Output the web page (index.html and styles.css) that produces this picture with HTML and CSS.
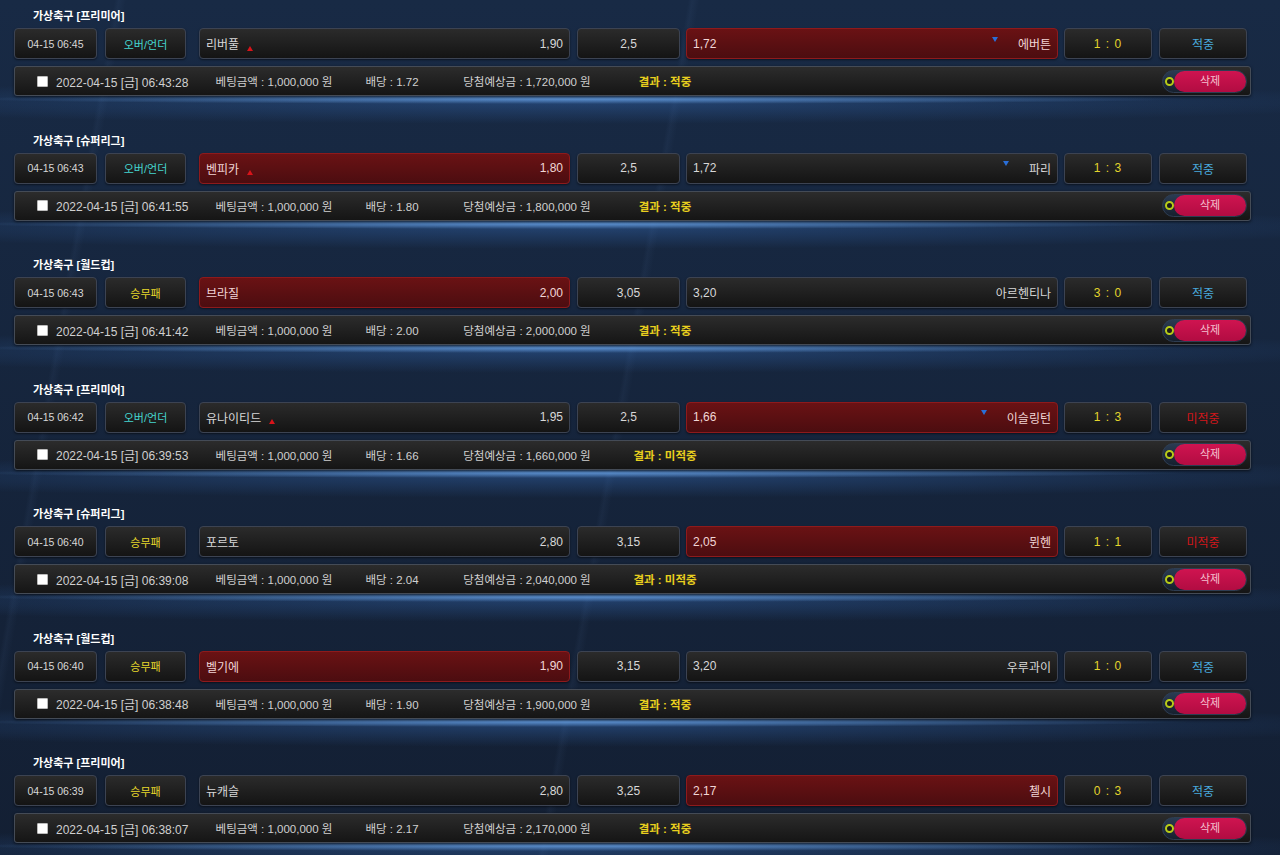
FILE: index.html
```html
<!DOCTYPE html>
<html lang="ko">
<head>
  <meta charset="UTF-8">
  <meta name="viewport" content="width=device-width, initial-scale=1">
  <title>베팅내역</title>
  <link rel="stylesheet" href="styles.css">
</head>
<body>

  <div class="bet-list" id="bet-list"></div>

  <script>
    const bets = [
      { league: '프리미어', time: '04-15 06:45', type: '오버/언더', ou: true, home: '리버풀', homeOdd: '1,90', draw: '2,5', awayOdd: '1,72', away: '에버튼', pick: 'away', score: '1 : 0', hit: true, date: '2022-04-15 [금] 06:43:28', rate: '1.72', win: '1,720,000' },
      { league: '슈퍼리그', time: '04-15 06:43', type: '오버/언더', ou: true, home: '벤피카', homeOdd: '1,80', draw: '2,5', awayOdd: '1,72', away: '파리', pick: 'home', score: '1 : 3', hit: true, date: '2022-04-15 [금] 06:41:55', rate: '1.80', win: '1,800,000' },
      { league: '월드컵', time: '04-15 06:43', type: '승무패', ou: false, home: '브라질', homeOdd: '2,00', draw: '3,05', awayOdd: '3,20', away: '아르헨티나', pick: 'home', score: '3 : 0', hit: true, date: '2022-04-15 [금] 06:41:42', rate: '2.00', win: '2,000,000' },
      { league: '프리미어', time: '04-15 06:42', type: '오버/언더', ou: true, home: '유나이티드', homeOdd: '1,95', draw: '2,5', awayOdd: '1,66', away: '이슬링턴', pick: 'away', score: '1 : 3', hit: false, date: '2022-04-15 [금] 06:39:53', rate: '1.66', win: '1,660,000' },
      { league: '슈퍼리그', time: '04-15 06:40', type: '승무패', ou: false, home: '포르토', homeOdd: '2,80', draw: '3,15', awayOdd: '2,05', away: '뮌헨', pick: 'away', score: '1 : 1', hit: false, date: '2022-04-15 [금] 06:39:08', rate: '2.04', win: '2,040,000' },
      { league: '월드컵', time: '04-15 06:40', type: '승무패', ou: false, home: '벨기에', homeOdd: '1,90', draw: '3,15', awayOdd: '3,20', away: '우루과이', pick: 'home', score: '1 : 0', hit: true, date: '2022-04-15 [금] 06:38:48', rate: '1.90', win: '1,900,000' },
      { league: '프리미어', time: '04-15 06:39', type: '승무패', ou: false, home: '뉴캐슬', homeOdd: '2,80', draw: '3,25', awayOdd: '2,17', away: '첼시', pick: 'away', score: '0 : 3', hit: true, date: '2022-04-15 [금] 06:38:07', rate: '2.17', win: '2,170,000' }
    ];

    const list = document.getElementById('bet-list');

    bets.forEach(b => {
      const block = document.createElement('div');
      block.className = 'block';
      block.innerHTML = `
        <div class="league">가상축구 [${b.league}]</div>
        <div class="game-row">
          <div class="cell time">${b.time}</div>
          <div class="cell type ${b.ou ? 'ou' : 'wdl'}">${b.type}</div>
          <div class="cell team home ${b.pick === 'home' ? 'picked' : ''}">
            <span class="name">${b.home}${b.ou ? '<i class="up"></i>' : ''}</span>
            <span>${b.homeOdd}</span>
          </div>
          <div class="cell draw">${b.draw}</div>
          <div class="cell team away ${b.pick === 'away' ? 'picked' : ''}">
            <span>${b.awayOdd}</span>
            <span class="name">${b.ou ? '<i class="down"></i>' : ''}${b.away}</span>
          </div>
          <div class="cell score">${b.score}</div>
          <div class="cell result ${b.hit ? 'hit' : 'miss'}">${b.hit ? '적중' : '미적중'}</div>
        </div>
        <div class="info-row">
          <span class="check"></span>
          <span class="info date">${b.date}</span>
          <span class="info amount">베팅금액 : 1,000,000 원</span>
          <span class="info rate">배당 : ${b.rate}</span>
          <span class="info win">당첨예상금 : ${b.win} 원</span>
          <span class="info outcome">결과 : ${b.hit ? '적중' : '미적중'}</span>
          <button class="del-btn"><span class="dot"></span><span class="del-label">삭제</span></button>
        </div>
      `;
      list.appendChild(block);
    });
  </script>
</body>
</html>
```

FILE: styles.css
```css
* { box-sizing: border-box; }
body {
  margin: 0;
  font-family: 'Liberation Sans', 'Noto Sans CJK KR', sans-serif;
  background: #15233a;
  color: #ddd;
  min-height: 100vh;
  overflow: hidden;
}

.bet-list {
  background:
    linear-gradient(100deg, transparent 0 8%, rgba(120,160,220,0.05) 8.3%, transparent 8.8%),
    linear-gradient(100deg, transparent 0 48%, rgba(120,160,220,0.05) 48.3%, transparent 48.8%),
    linear-gradient(to bottom, #182a45, #131f33);
}

.block {
  height: 124.5px;
  padding: 9px 0 0 14px;
  background:
    radial-gradient(ellipse 48% 5px at 45% 99px, rgba(110,170,240,0.75), transparent),
    radial-gradient(ellipse 65% 22px at 45% 102px, rgba(50,100,170,0.45), transparent);
}

.league {
  height: 14px;
  line-height: 14px;
  margin: 0 0 5px 19px;
  font-size: 11px;
  font-weight: bold;
  color: #fff;
}

.game-row {
  display: flex;
  height: 31px;
}

.cell {
  height: 31px;
  display: flex;
  align-items: center;
  justify-content: center;
  font-size: 12px;
  color: #d8d8d8;
  background: linear-gradient(to bottom, #2b2b2b, #141414);
  border: 1px solid #3c4352;
  border-radius: 4px;
  box-shadow: 0 1px 2px rgba(0,0,0,0.5);
}

.time { width: 83px; margin-right: 8px; font-size: 10.5px; }
.type { width: 81px; margin-right: 13px; font-size: 11px; }
.type.ou { color: #45d6cf; }
.type.wdl { color: #e7d72a; }

.team {
  justify-content: space-between;
  padding: 0 6px;
}
.home { width: 371px; margin-right: 7px; }
.draw { width: 103px; margin-right: 6px; }
.away { width: 372px; margin-right: 6px; }

.team.picked {
  background: linear-gradient(to bottom, #6a1214, #4c0d10);
  border-color: #8e1a1c;
  color: #f1d6d6;
}

.name { display: flex; align-items: center; }

.up {
  display: inline-block;
  margin: 9px 0 0 8px;
  border-left: 3px solid transparent;
  border-right: 3px solid transparent;
  border-bottom: 5px solid #d8141a;
}

.down {
  display: inline-block;
  margin: -9px 20px 0 0;
  border-left: 3px solid transparent;
  border-right: 3px solid transparent;
  border-top: 5px solid #2a6fd8;
}

.score { width: 88px; margin-right: 7px; color: #e3d52c; font-size: 12px; letter-spacing: 1px; }
.result { width: 88px; }
.result.hit { color: #49a9dc; }
.result.miss { color: #d0161a; }

.info-row {
  display: flex;
  align-items: center;
  width: 1237px;
  height: 30px;
  margin-top: 7px;
  background: linear-gradient(to bottom, #2c2c2c, #151515);
  border: 1px solid #444b56;
  border-radius: 3px;
  box-shadow: 0 1px 3px rgba(0,0,0,0.6);
}

.check {
  width: 11px;
  height: 11px;
  margin-left: 22px;
  background: #fff;
  border: 1px solid #bbb;
  border-radius: 1px;
}

.info {
  font-size: 11.5px;
  color: #d0d0d0;
  text-align: center;
  white-space: nowrap;
}
.date { width: 144px; text-align: left; padding-left: 8px; font-size: 12px; }
.amount { width: 164px; }
.rate { width: 72px; }
.win { width: 198px; }
.outcome { width: 78px; color: #e8cf1e; font-weight: bold; }

.del-btn {
  margin-left: auto;
  margin-right: 3px;
  width: 85px;
  height: 23px;
  padding: 0 0 0 11px;
  display: flex;
  align-items: center;
  position: relative;
  border: 1px solid #2e3d52;
  border-radius: 12px;
  background: linear-gradient(to bottom, #2a3b52, #16202e);
  cursor: pointer;
}

.dot {
  position: absolute;
  left: 2px;
  top: 6px;
  width: 9px;
  height: 9px;
  border: 2px solid #b8cc18;
  background: #1a1a1a;
  border-radius: 50%;
  z-index: 1;
}

.del-label {
  flex: 1;
  height: 21px;
  line-height: 21px;
  border-radius: 11px;
  background: linear-gradient(to bottom, #cf1450, #b20c42);
  color: #f4c0cf;
  font-family: 'Liberation Sans', 'Noto Sans CJK KR', sans-serif;
  font-size: 11px;
  text-align: center;
}
```
